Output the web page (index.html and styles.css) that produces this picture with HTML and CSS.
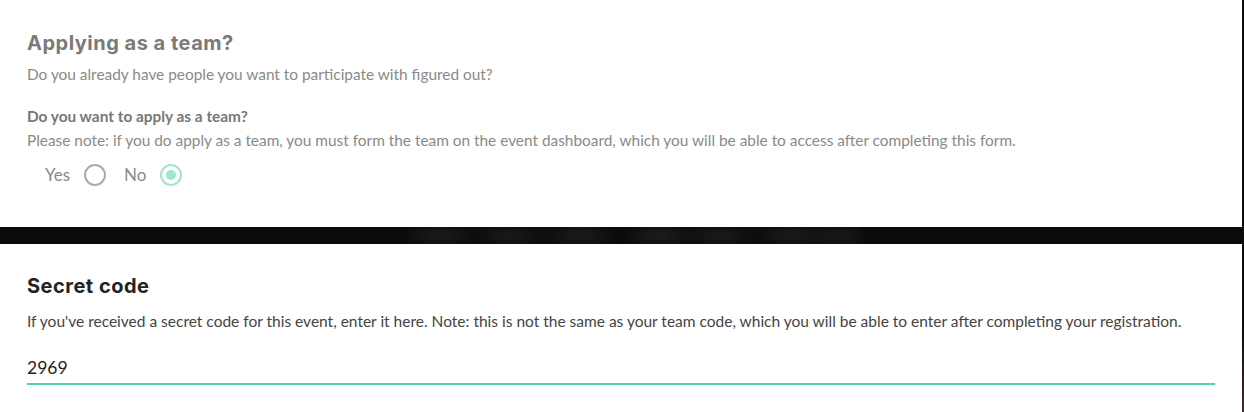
FILE: index.html
```html
<!DOCTYPE html>
<html lang="en">
<head>
<meta charset="utf-8">
<title>Application form</title>
<link rel="stylesheet" href="styles.css">
</head>
<body>
<div class="page">
  <section class="card card-team">
    <h2 class="title title-muted">Applying as a team?</h2>
    <p class="subtitle">Do you already have people you want to participate with figured out?</p>
    <div class="field">
      <div class="question">Do you want to apply as a team?</div>
      <div class="hint">Please note: if you do apply as a team, you must form the team on the event dashboard, which you will be able to access after completing this form.</div>
      <div class="radios">
        <label class="radio"><span class="radio-label">Yes</span><span class="radio-dot"></span></label>
        <label class="radio radio-on"><span class="radio-label">No</span><span class="radio-dot"></span></label>
      </div>
    </div>
  </section>
  <div class="band"><div class="band-glow"></div></div>
  <section class="card card-code">
    <h2 class="title">Secret code</h2>
    <p class="desc">If you've received a secret code for this event, enter it here. Note: this is not the same as your team code, which you will be able to enter after completing your registration.</p>
    <div class="input">2969</div>
  </section>
</div>
</body>
</html>
```

FILE: styles.css
```css
html, body {
  margin: 0;
  padding: 0;
}
body {
  width: 1244px;
  height: 412px;
  overflow: hidden;
  background: linear-gradient(to bottom, #0b0b0b 0, #0b0b0b 330px, #3b2c2c 412px);
  font-family: "Lato", "Liberation Sans", sans-serif;
}
.page {
  width: 1242px;
}
.card {
  background: #fff;
  padding: 0 27px;
}
.card-team {
  height: 227px;
  padding-top: 30px;
  box-sizing: border-box;
}
.title {
  margin: 0;
  font-family: "Inter", "DejaVu Sans", sans-serif;
  font-weight: 700;
  font-size: 20px;
  letter-spacing: 0.5px;
  line-height: 26px;
  color: #222;
}
.title-muted {
  color: #7a7a7a;
}
.subtitle {
  margin: 9px 0 0;
  font-size: 15.4px;
  line-height: 18px;
  color: #8a8a8a;
}
.field {
  margin-top: 24px;
}
.question {
  font-size: 15.4px;
  font-weight: 700;
  line-height: 18px;
  color: #777;
}
.hint {
  margin-top: 6px;
  font-size: 15.4px;
  line-height: 18px;
  color: #8a8a8a;
}
.radios {
  display: flex;
  gap: 18px;
  margin-top: 14px;
  padding-left: 18px;
}
.radio {
  display: flex;
  align-items: center;
  gap: 14px;
}
.radio-label {
  font-size: 17px;
  line-height: 24px;
  color: #8a8a8a;
}
.radio-dot {
  width: 18px;
  height: 18px;
  border: 2px solid #aaaaaa;
  border-radius: 50%;
  box-sizing: content-box;
  display: flex;
  align-items: center;
  justify-content: center;
}
.radio-on .radio-dot {
  border-color: #9fe6cf;
}
.radio-on .radio-dot::after {
  content: "";
  width: 10px;
  height: 10px;
  border-radius: 50%;
  background: #9fe6cf;
}
.band {
  height: 17px;
  overflow: hidden;
  background: #0b0b0b;
  display: flex;
}
.band-glow {
  margin-left: 400px;
  width: 460px;
  height: 17px;
  background:
    radial-gradient(ellipse 40px 12px at 40px 8px, #212121, transparent),
    radial-gradient(ellipse 40px 12px at 110px 8px, #1f1f1f, transparent),
    radial-gradient(ellipse 40px 12px at 180px 8px, #212121, transparent),
    radial-gradient(ellipse 40px 12px at 260px 8px, #222, transparent),
    radial-gradient(ellipse 40px 12px at 320px 8px, #1f1f1f, transparent),
    radial-gradient(ellipse 40px 12px at 390px 8px, #212121, transparent),
    radial-gradient(ellipse 40px 12px at 440px 8px, #1e1e1e, transparent);
  filter: blur(4px);
}
.card-code {
  height: 170px;
  padding-top: 29px;
  box-sizing: border-box;
}
.desc {
  margin: 12px 0 0;
  font-size: 15.5px;
  line-height: 20px;
  color: #444;
}
.input {
  margin-top: 26px;
  width: 1188px;
  font-size: 17.5px;
  line-height: 22px;
  color: #222;
  padding-bottom: 4px;
  border-bottom: 2px solid #52d3b0;
}
```
